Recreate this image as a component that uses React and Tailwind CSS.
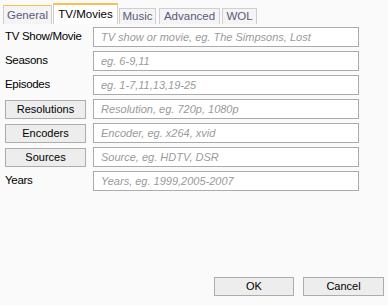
import React from 'react';

const rows = [
  { label: 'TV Show/Movie', hint: 'TV show or movie, eg. The Simpsons, Lost' },
  { label: 'Seasons', hint: 'eg. 6-9,11' },
  { label: 'Episodes', hint: 'eg. 1-7,11,13,19-25' },
  { label: 'Resolutions', hint: 'Resolution, eg. 720p, 1080p', button: true },
  { label: 'Encoders', hint: 'Encoder, eg. x264, xvid', button: true },
  { label: 'Sources', hint: 'Source, eg. HDTV, DSR', button: true },
  { label: 'Years', hint: 'Years, eg. 1999,2005-2007' },
];

const Tab = ({ children, selected, hover, className }) => {
  if (selected) {
    return (
      <div className={`h-[21px] bg-white border-x border-[#cfcfcf] border-t-2 border-t-[#f7c24d] flex items-center justify-center text-black ${className}`}>
        {children}
      </div>
    );
  }
  if (hover) {
    return (
      <div className={`h-[19px] pt-[2px] bg-[#f4f4f4] border-x border-[#cfcfcf] border-t border-t-[#f7c24d] flex items-center justify-center text-[#59597a] ${className}`}>
        {children}
      </div>
    );
  }
  return (
    <div className={`h-[16px] bg-[#f4f4f4] border-x border-t border-[#cfcfcf] flex items-center justify-center text-[#59597a] ${className}`}>
      {children}
    </div>
  );
};

export default function App() {
  return (
    <div className="w-[388px] h-[305px] bg-[#fafafa] flex flex-col text-[11px] text-black" style={{ fontFamily: '"Liberation Sans", Arial, sans-serif' }}>
      {/* tab strip */}
      <div className="h-[24px] flex items-end pl-[3px] gap-[1px] text-[11.5px]">
        <Tab hover className="w-[49px]">General</Tab>
        <Tab selected className="w-[65px]">TV/Movies</Tab>
        <Tab className="w-[37px]">Music</Tab>
        <Tab className="w-[61px] ml-[2px]">Advanced</Tab>
        <Tab className="w-[35px] ml-[1px]">WOL</Tab>
      </div>

      {/* form */}
      <div className="grid grid-cols-[88px_266px] gap-y-[4px] pl-[5px] pt-[3px]">
        {rows.map((row, i) => (
          <React.Fragment key={i}>
            <div className="h-[20px] flex items-center">
              {row.button ? (
                <button className="w-[81px] h-[19px] mt-[1px] bg-[#ededed] border border-[#adadad] text-[11px] text-black leading-none">
                  {row.label}
                </button>
              ) : (
                <span className="text-[11.5px] tracking-[-0.3px]">{row.label}</span>
              )}
            </div>
            <div className="h-[20px] bg-white border border-[#ababab] flex items-center px-[7px] italic text-[11px] text-[#9a9a9a]">
              {row.hint}
            </div>
          </React.Fragment>
        ))}
      </div>

      {/* footer */}
      <div className="mt-auto flex justify-end gap-[9px] pr-[4px] pb-[9px]">
        <button className="w-[80px] h-[19px] bg-[#ededed] border border-[#adadad] text-[11px] leading-none">OK</button>
        <button className="w-[81px] h-[19px] bg-[#ededed] border border-[#adadad] text-[11px] leading-none">Cancel</button>
      </div>
    </div>
  );
}
